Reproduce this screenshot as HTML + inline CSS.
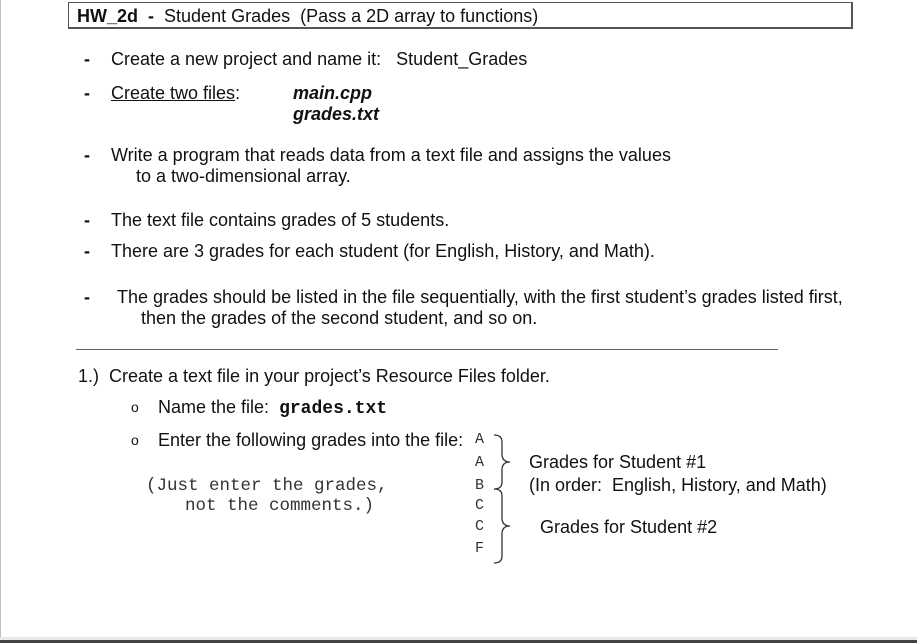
<!DOCTYPE html>
<html><head><style>
body{margin:0;width:917px;height:643px;background:#fff;position:relative;overflow:hidden;font-family:"Liberation Sans",Arial,sans-serif;font-size:18px;color:#111}
.t{position:absolute;line-height:20px;white-space:pre}
.m{font-family:"Liberation Mono","Courier New",monospace;font-size:17.5px;color:#333}
.g{font-family:"Liberation Mono","Courier New",monospace;font-size:15px;color:#333}
.b{font-weight:bold;font-style:italic}
</style></head><body>
<div style="position:absolute;left:0;top:0;width:1px;height:640px;background:#b8c0cc"></div>
<div style="position:absolute;left:0;top:637px;width:917px;height:3px;background:#e6e8ec"></div>
<div style="position:absolute;left:0;top:640px;width:917px;height:3px;background:#444"></div>
<div style="position:absolute;left:68px;top:2px;width:782px;height:24px;border:1px solid #555;border-width:1px 2px 2px 1px"></div>
<div class="t" style="left:77px;top:6px"><b>HW_2d</b>  <b>-</b>  Student Grades  (Pass a 2D array to functions)</div>

<div class="t" style="left:84px;top:49px"><b>-</b></div>
<div class="t" style="left:111px;top:49px">Create a new project and name it:   Student_Grades</div>
<div class="t" style="left:84px;top:83px"><b>-</b></div>
<div class="t" style="left:111px;top:83px"><u>Create two files</u>:</div>
<div class="t b" style="left:293px;top:83px">main.cpp</div>
<div class="t b" style="left:293px;top:104px">grades.txt</div>

<div class="t" style="left:84px;top:145px"><b>-</b></div>
<div class="t" style="left:111px;top:145px">Write a program that reads data from a text file and assigns the values</div>
<div class="t" style="left:136px;top:166px">to a two-dimensional array.</div>

<div class="t" style="left:84px;top:210px"><b>-</b></div>
<div class="t" style="left:111px;top:210px">The text file contains grades of 5 students.</div>
<div class="t" style="left:84px;top:241px"><b>-</b></div>
<div class="t" style="left:111px;top:241px">There are 3 grades for each student (for English, History, and Math).</div>

<div class="t" style="left:84px;top:287px"><b>-</b></div>
<div class="t" style="left:117px;top:287px">The grades should be listed in the file sequentially, with the first student’s grades listed first,</div>
<div class="t" style="left:141px;top:308px">then the grades of the second student, and so on.</div>

<div style="position:absolute;left:76px;top:349px;width:702px;height:1px;background:#666"></div>

<div class="t" style="left:78px;top:366px">1.)  Create a text file in your project’s Resource Files folder.</div>
<div class="t" style="left:131px;top:397px;font-size:14px">o</div>
<div class="t" style="left:158px;top:397px">Name the file:  <span class="m" style="font-weight:bold;color:#111;font-size:18px">grades.txt</span></div>
<div class="t" style="left:131px;top:430px;font-size:14px">o</div>
<div class="t" style="left:158px;top:430px">Enter the following grades into the file:</div>

<div class="t g" style="left:475px;top:430px">A</div>
<div class="t g" style="left:475px;top:453px">A</div>
<div class="t g" style="left:475px;top:476px">B</div>
<div class="t g" style="left:475px;top:496px">C</div>
<div class="t g" style="left:475px;top:517px">C</div>
<div class="t g" style="left:475px;top:539px">F</div>

<svg style="position:absolute;left:490px;top:432px" width="40" height="135" viewBox="0 0 40 135">
<path d="M4 3 Q12 3 12 10 V22 Q12 30 20 30 Q12 30 12 38 V50 Q12 57 4 57" fill="none" stroke="#333" stroke-width="1.3"/>
<path d="M4 57 Q12 57 12 64 V86 Q12 94 20 94 Q12 94 12 102 V124 Q12 131 4 131" fill="none" stroke="#333" stroke-width="1.3"/>
</svg>

<div class="t" style="left:529px;top:452px">Grades for Student #1</div>
<div class="t" style="left:529px;top:475px">(In order:  English, History, and Math)</div>
<div class="t" style="left:540px;top:517px">Grades for Student #2</div>

<div class="t m" style="left:146px;top:476px">(Just enter the grades,</div>
<div class="t m" style="left:185px;top:496px">not the comments.)</div>
</body></html>
